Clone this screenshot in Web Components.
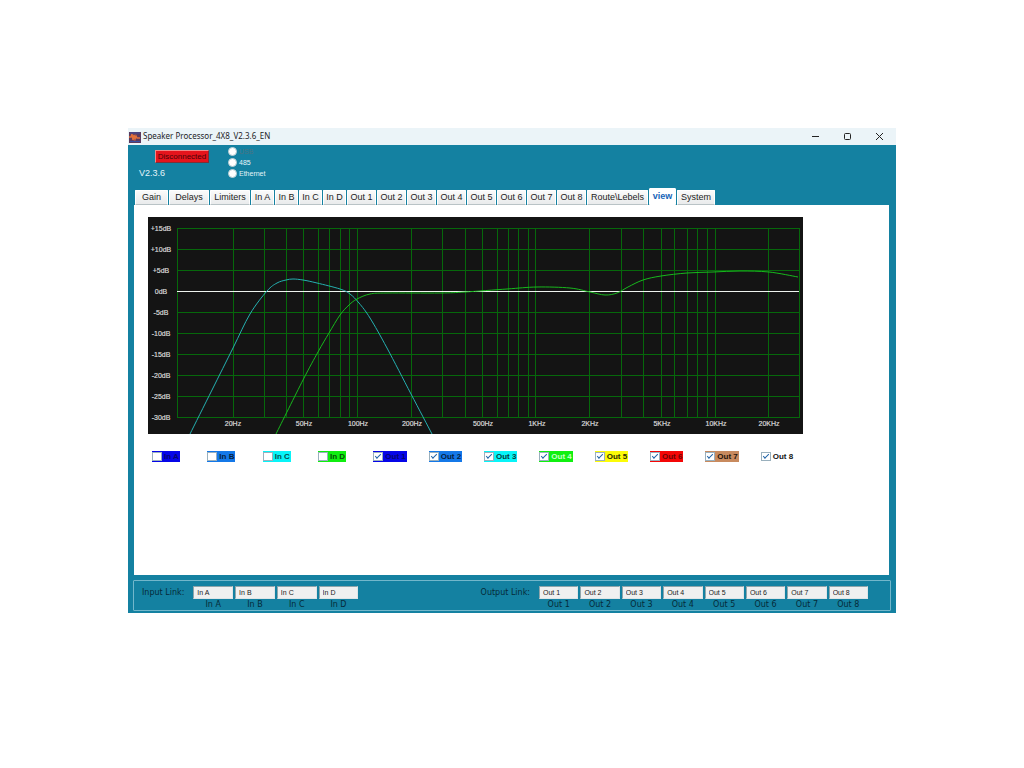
<!DOCTYPE html>
<html lang="en">
<head>
<meta charset="utf-8">
<title>Speaker Processor</title>
<style>
  body { margin: 0; background: #fff; font-family: "Liberation Sans", Arial, sans-serif; font-size: 8px; }
</style>
</head>
<body>
<sp-window></sp-window>
<script>
const define = (name, html, setup) => customElements.define(name, class extends HTMLElement {
  connectedCallback() {
    if (this.shadowRoot) return;
    const root = this.attachShadow({ mode: 'open' });
    root.innerHTML = typeof html === 'function' ? html(this) : html;
    if (setup) setup(this, root);
  }
});

define('sp-titlebar', `
<style>
  :host { display: flex; align-items: center; box-sizing: border-box; height: 17px; padding-right: 1px; background: #ebf4f8; color: #1c2327; font: 8px/15px "Noto Sans", "Open Sans", sans-serif; }
  .icon { width: 12px; height: 12px; margin: 0 2px 0 1px; }
  .title { flex: 1; height: 17px; white-space: nowrap; }
  button { width: 32px; height: 17px; padding: 0; border: 0; background: none; display: grid; place-items: center; }
  button svg { width: 9px; height: 9px; fill: none; stroke: #222; }
</style>
<svg class="icon" viewBox="0 0 12 12" aria-hidden="true"><rect y="1" width="12" height="11" fill="#5b3a5e"/><path d="M0 6h2l1-3 1 6 1-5 1 4 1-3 1 2h3" fill="none" stroke="#e2703a" stroke-width="1.500"/><path d="M1 10.500h10M1 2h10" stroke="#3a4fa0"/></svg>
<span class="title"><slot></slot></span>
<button aria-label="Minimize"><svg viewBox="0 0 9 9"><path d="M1 4.500h7"/></svg></button>
<button aria-label="Maximize"><svg viewBox="0 0 9 9"><rect x="1.500" y="1.500" width="6" height="6" rx="1"/></svg></button>
<button aria-label="Close"><svg viewBox="0 0 9 9"><path d="M1 1l7 7M8 1l-7 7"/></svg></button>`);

define('sp-connection', `
<style>
  :host { display: flex; height: 43px; color: #e4f5fa; }
  .status { display: flex; flex-direction: column; width: 93px; padding: 5px 0 0 6px; box-sizing: border-box; }
  button { width: 54px; height: 13px; margin: 0 0 0 21px; padding: 0; font: 8px/9px "Liberation Sans", Arial, sans-serif; color: #4a0206; background: #e5141c; border: 1px solid; border-color: #f08a8a #7d3038 #7d3038 #f08a8a; }
  .version { font-size: 9px; line-height: 11px; margin: 5px 0 0 5px; }
  fieldset { margin: 0; padding: 1px 0 0 7px; border: 0; display: flex; flex-direction: column; }
  label { display: flex; align-items: center; gap: 2px; height: 11px; font-size: 7px; }
  label.off { color: #4a7482; }
  input { appearance: none; width: 9px; height: 9px; margin: 0; border-radius: 50%; background: #fff; border: 1px solid #b9cdd3; }
</style>
<div class="status"><button>Disconnected</button><span class="version">V2.3.6</span></div>
<fieldset aria-label="Connection">
  <label class="off"><input type="radio" name="port" disabled>USB</label>
  <label><input type="radio" name="port">485</label>
  <label><input type="radio" name="port">Ethernet</label>
</fieldset>`);

define('sp-tab', el => `
<style>
  :host { display: block; flex: 0 0 auto; padding-right: 1px; box-sizing: border-box; width: 30px; }
  :host([size="input"]) { width: 24px; }
  :host([size="s"]) { width: 34px; }
  :host([size="m"]) { width: 41px; }
  :host([size="l"]) { width: 62px; }
  :host([selected]) { width: 28px; }
  :host([size="system"]) { width: 39px; }
  button { width: 100%; height: 15px; padding: 0; border: 1px solid #fff; border-bottom-color: #b9c3c6; border-radius: 1px 1px 0 0; background: linear-gradient(#fafafa, #e9ebec); color: #1c1c1c; font: 9px/13px "Liberation Sans", Arial, sans-serif; white-space: nowrap; }
  :host([selected]) button { height: 17px; background: #fff; border-bottom-color: #fff; color: #1565b8; font-weight: bold; }
</style>
<button role="tab" aria-selected="${el.hasAttribute('selected')}"><slot></slot></button>`);

define('sp-tabs', `
<style>
  :host { display: flex; align-items: flex-end; height: 17px; padding-left: 7px; }
</style>
<slot></slot>`, el => {
  el.setAttribute('role', 'tablist');
  const outs = [1, 2, 3, 4, 5, 6, 7, 8].map(n => ['Out ' + n]);
  const tabs = [['Gain', 's'], ['Delays', 'm'], ['Limiters', 'm'], ...['In A', 'In B', 'In C', 'In D'].map(t => [t, 'input']),
    ...outs, ['Route\\Lebels', 'l'], ['view', 'view'], ['System', 'system']];
  for (const [text, size] of tabs) {
    const tab = document.createElement('sp-tab');
    tab.textContent = text;
    if (size === 'view') tab.setAttribute('selected', '');
    else if (size) tab.setAttribute('size', size);
    el.append(tab);
  }
});

define('sp-response', () => {
  const cols = [29, 85, 116, 138, 155, 170, 181, 192, 201, 209, 263, 294, 317, 334, 349, 360, 370, 380, 387, 441, 473, 495, 513, 526, 539, 549, 559, 567, 620, 651];
  const rowY = i => 11.5 + 21 * i;
  const smooth = p => {
    let d = `M${p[0]}`;
    for (let i = 0; i < p.length - 1; i++) {
      const a = p[i - 1] || p[i], b = p[i], c = p[i + 1], e = p[i + 2] || c;
      d += `C${b[0] + (c[0] - a[0]) / 6},${b[1] + (c[1] - a[1]) / 6} ${c[0] - (e[0] - b[0]) / 6},${c[1] - (e[1] - b[1]) / 6} ${c}`;
    }
    return d;
  };
  const sub = [[42, 217], [64, 173], [85, 131], [102, 97], [119, 74], [129, 66], [138, 63], [145, 62], [155, 63], [169, 66], [192, 72], [202, 77], [211, 86], [222, 101], [239, 131], [263, 177], [284, 217]];
  const top = [[128, 217], [155, 163], [170, 135], [181, 116], [192, 98], [201, 88], [209, 82], [222, 77], [239, 76], [292, 76], [317, 75], [359, 72], [389, 70], [422, 71], [442, 75], [457, 78], [469, 76], [480, 70], [495, 63], [513, 59], [539, 56], [565, 55], [592, 54], [621, 55], [650, 60]];
  const levels = ['+15dB', '+10dB', '+5dB', '0dB', '-5dB', '-10dB', '-15dB', '-20dB', '-25dB', '-30dB'];
  const freqs = [[85, '20Hz'], [156, '50Hz'], [210, '100Hz'], [264, '200Hz'], [335, '500Hz'], [389, '1KHz'], [442, '2KHz'], [514, '5KHz'], [568, '10KHz'], [621, '20KHz']];
  return `
<style>
  :host { display: block; max-width: 655px; }
  svg { display: block; width: 100%; background: #141414; }
  .grid { stroke: #06680b; fill: none; }
  .zero { stroke: #eef3ee; }
  .curve { fill: none; }
  text { font: 7px "Liberation Sans", Arial, sans-serif; fill: #d8d8d8; stroke: #d8d8d8; stroke-width: .2px; text-anchor: middle; }
</style>
<svg viewBox="0 0 655 217" role="img" aria-label="Frequency response">
  <path class="grid" d="${cols.map(x => `M${x + .5} 11V201`).join('')}${levels.map((_, i) => `M29 ${rowY(i)}H652`).join('')}"/>
  <path class="zero" d="M29 74.5H651"/>
  <path class="curve" stroke="#25b0b0" d="${smooth(sub)}"/>
  <path class="curve" stroke="#18b81d" d="${smooth(top)}"/>
  ${levels.map((t, i) => `<text x="13" y="${14 + 21 * i}">${t}</text>`).join('')}
  ${freqs.map(([x, t]) => `<text x="${x}" y="209">${t}</text>`).join('')}
</svg>`;
});

define('sp-channel', el => `
<style>
  :host { display: flex; }
  label { display: flex; align-items: center; gap: 2px; height: 11px; padding-right: 1px; background: var(--channel, transparent); color: var(--ink, #101010); font: bold 8px/11px "Liberation Sans", Arial, sans-serif; white-space: nowrap; }
  input { appearance: none; box-sizing: border-box; width: 10px; height: 9px; margin: 0; border: 1px solid #9ab0bd; background: #fff; display: grid; place-items: center; }
  input:checked::before { content: ""; width: 5px; height: 2px; border: solid #1f63a8; border-width: 0 0 1px 1px; rotate: -45deg; margin-bottom: 2px; }
</style>
<label><input type="checkbox" ${el.hasAttribute('checked') ? 'checked' : ''}><slot></slot></label>`);

define('sp-channels', `
<style>
  :host { display: grid; grid-template-columns: repeat(12, 1fr); max-width: 664px; }
</style>
<slot></slot>`, el => {
  const items = [['In A', '#0505e8', '#050570'], ['In B', '#1478e8', '#06203f'], ['In C', '#08f4f8', '#055050'], ['In D', '#10ee10', '#064f06'],
    ['Out 1', '#0505e8', '#050570'], ['Out 2', '#1478e8', '#06203f'], ['Out 3', '#08f4f8', '#053c3c'], ['Out 4', '#10f010', '#c8ffc8'],
    ['Out 5', '#fcfc08', '#2c2c04'], ['Out 6', '#f40606', '#6c0404'], ['Out 7', '#c88a5e', '#24150c'], ['Out 8', 'transparent', '#141414']];
  for (const [text, color, ink] of items) {
    const c = document.createElement('sp-channel');
    c.textContent = text;
    c.style.setProperty('--channel', color);
    c.style.setProperty('--ink', ink);
    if (text.startsWith('Out')) c.setAttribute('checked', '');
    el.append(c);
  }
});

define('sp-link-group', el => {
  const names = el.getAttribute('names').split(',');
  return `
<style>
  :host { display: flex; color: #052b38; font: 8px/11px "DejaVu Sans", sans-serif; }
  .caption { white-space: nowrap; padding-top: 1px; margin-right: 9px; }
  .fields { display: grid; grid-auto-flow: column; grid-auto-columns: 1fr; column-gap: 2px; }
  label { display: flex; flex-direction: column-reverse; align-items: center; }
  input { box-sizing: border-box; width: 100%; height: 13px; padding: 0 0 0 3px; border: 1px solid; border-color: #8fa5ab #dfe5e7 #dfe5e7 #8fa5ab; background: #f0f0f0; color: #222; font: 7px "Liberation Sans", Arial, sans-serif; }
</style>
<span class="caption">${el.getAttribute('caption')}</span>
<div class="fields">${names.map(n => `<label>${n}<input type="text" value="${n}"></label>`).join('')}</div>`;
}, (el, root) => {
  root.querySelector('.fields').style.width = el.getAttribute('names').split(',').length * 41 + 1 + 'px';
});

define('sp-window', `
<style>
  :host { display: block; margin: 128px 12.5vw; background: #1481a1; }
  main { background: #fff; margin: 0 7px 0 6px; padding: 12px 14px 0; min-height: 358px; }
  sp-channels { margin: 17px 0 0 4px; }
  footer { display: flex; justify-content: space-between; margin: 5px 5px 0; padding: 5px 22px 1px 8px; border: 1px solid #72b7cb; height: 23px; border-radius: 1px; }
  .base { height: 2px; }
</style>
<sp-titlebar>Speaker Processor_4X8_V2.3.6_EN</sp-titlebar>
<sp-connection></sp-connection>
<sp-tabs></sp-tabs>
<main>
  <sp-response></sp-response>
  <sp-channels></sp-channels>
</main>
<footer>
  <sp-link-group caption="Input Link:" names="In A,In B,In C,In D"></sp-link-group>
  <sp-link-group caption="Output Link:" names="Out 1,Out 2,Out 3,Out 4,Out 5,Out 6,Out 7,Out 8"></sp-link-group>
</footer>
<div class="base"></div>`);
</script>
</body>
</html>
